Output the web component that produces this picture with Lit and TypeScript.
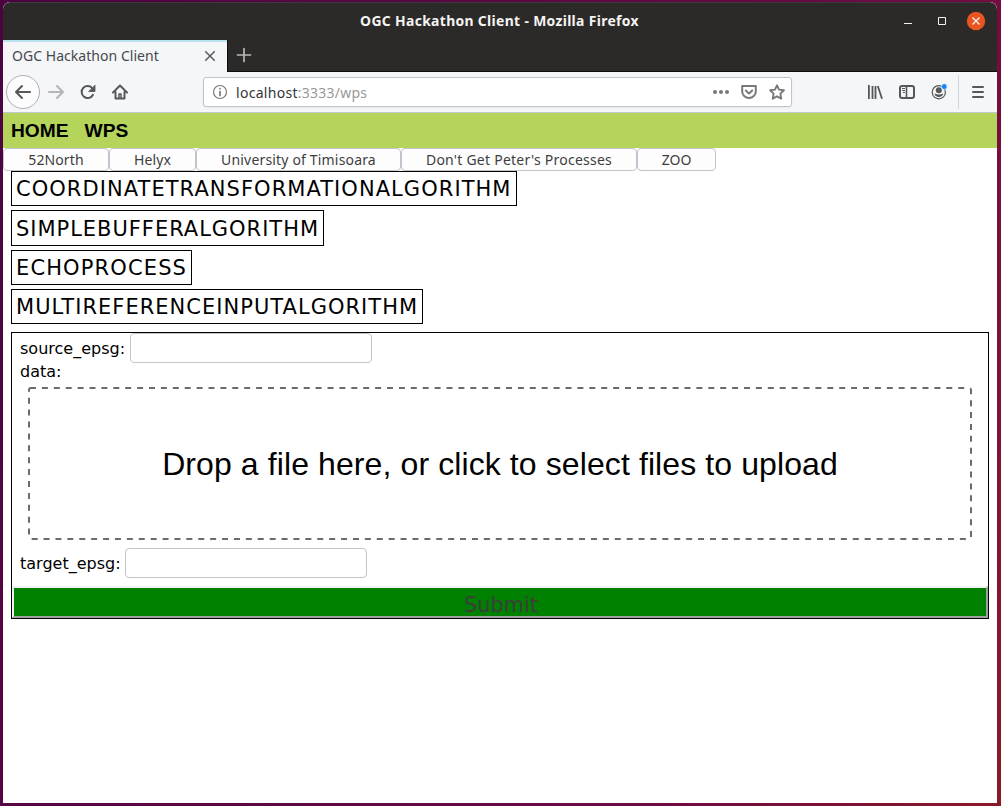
import { LitElement, html, css, svg } from "lit";
import { customElement } from "lit/decorators.js";

const servers = [
  { name: "52North", width: 106, spacing: 0.1 },
  { name: "Helyx", width: 87, spacing: 0.1 },
  { name: "University of Timisoara", width: 205, spacing: 0.17 },
  { name: "Don't Get Peter's Processes", width: 236, spacing: 0.24 },
  { name: "ZOO", width: 79, spacing: 0 },
];
const processes = [
  { name: "COORDINATETRANSFORMATIONALGORITHM", width: 506, height: 35, spacing: 1.05, line: 34 },
  { name: "SIMPLEBUFFERALGORITHM", width: 313, height: 36, spacing: 0.97, line: 36 },
  { name: "ECHOPROCESS", width: 181, height: 35, spacing: 1.13, line: 34 },
  { name: "MULTIREFERENCEINPUTALGORITHM", width: 412, height: 35, spacing: 1.02, line: 34 },
];

const icon = (size: number, body: unknown) =>
  html`<svg width=${size} height=${size} viewBox="0 0 16 16" fill="none" stroke="currentColor" stroke-width="2" stroke-linecap="round" stroke-linejoin="round">${body}</svg>`;

@customElement("browser-chrome")
class BrowserChrome extends LitElement {
  static styles = css`
    :host { display: block; font-family: "Noto Sans", sans-serif; }
    * { box-sizing: border-box; }
    svg { display: block; flex: none; overflow: visible; }
    .title { height: 38px; display: grid; grid-template-columns: 1fr auto 1fr; align-items: center; background: #2c2929; color: #f5f4f2; border-top: 1px solid #3c3a3a; border-radius: 7px 7px 0 0; padding: 0 11px 2px 0; }
    .caption { grid-column: 2; font-weight: 700; font-size: 13.9px; letter-spacing: 0.34px; white-space: nowrap; padding-left: 10px; }
    .controls { display: flex; justify-content: flex-end; align-items: center; }
    .tabs { height: 32px; display: flex; background: #2c2929; color: #b9b8b8; }
    .rest { flex: 1; border-bottom: 1px solid #0f0c0c; border-left: 1px solid #0f0c0c; padding: 7px 8px; }
    .tab { width: 224px; background: #f5f6f7; border-top: 2px solid #b9e3ef; color: #45494c; display: flex; align-items: center; justify-content: space-between; padding: 0 9px 2px; font-size: 14px; letter-spacing: 0.04px; }
    .name { padding-bottom: 2px; }
    .close { color: #5c5e60; }
    .tools { height: 41px; background: #f5f6f8; border-bottom: 1px solid #c3c6cc; display: flex; align-items: center; color: #555759; padding-left: 3px; }
    .back { width: 34px; height: 34px; border: 1px solid #aeb0b3; border-radius: 50%; background: #fcfcfd; display: grid; place-items: center; }
    .forward { color: #b4b5b8; margin-left: 8px; }
    .reload { margin-left: 16px; }
    .home { margin-left: 16px; }
    .url { width: 589px; height: 30px; margin-left: 75px; border: 1px solid #c0c4c9; border-radius: 3px; background: #fff; display: flex; align-items: center; padding: 0 6px 0 8px; color: #77797b; box-shadow: 0 1px 3px #0000000d; }
    .address { flex: 1; margin-left: 8px; font-size: 14px; letter-spacing: 0.22px; color: #999; }
    .host { color: #343638; letter-spacing: 0.3px; }
    .gap { margin-left: 12px; }
    .right { display: flex; align-items: center; gap: 16px; margin-left: 75px; }
    .menu { margin-left: 11px; height: 34px; border-left: 1px solid #d4d5d8; padding-left: 11px; display: flex; align-items: center; }
  `;
  render() {
    return html`
      <div class="title">
        <span class="caption">OGC Hackathon Client - Mozilla Firefox</span>
        <div class="controls">
          <svg width="80" height="20" viewBox="0 0 80 20" fill="none" stroke="#f4f2f0">
            <path d="M-2 12.500h8M32.500 6.500h7v7h-7z" /><circle cx="70" cy="10" r="9.2" fill="#e95420" stroke="none" />
            <path d="m66.500 6.500 7 7m0-7-7 7" stroke-width="1.400" />
          </svg>
        </div>
      </div>
      <div class="tabs">
        <div class="tab"><span class="name">OGC Hackathon Client</span><span class="close">${icon(16, svg`<path d="m3.700 3.700 8.600 8.600m0-8.600-8.600 8.600" stroke-width="1.600"/>`)}</span></div>
        <div class="rest">${icon(16, svg`<path d="M8 1.500v13M1.500 8h13" stroke-width="1.700"/>`)}</div>
      </div>
      <div class="tools">
        <div class="back">${icon(16, svg`<path d="M15 8H1.500M7 2 1 8l6 6"/>`)}</div>
        <div class="forward">${icon(16, svg`<path d="M1 8h13.500M9 2l6 6-6 6"/>`)}</div>
        <div class="reload">${icon(16, svg`<path d="M13 10.800A6 6 0 1 1 12.500 4.500"/><path d="M15 1.500v6H9z" fill="currentColor" stroke-width=".8"/>`)}</div>
        <div class="home">${icon(16, svg`<path d="M1 8.500 8 1.500l7 7M3.500 8v6.500h9V8"/><path d="M7 14v-4h2v4" stroke-width="1.500"/>`)}</div>
        <div class="url">
          ${icon(16, svg`<circle cx="8" cy="8" r="6.500" stroke-width="1.200"/><path d="M8 7.500v4M8 4.700v.1" stroke-width="1.700"/>`)}
          <span class="address"><span class="host">localhost</span>:3333/wps</span>
          ${icon(16, svg`<g fill="currentColor" stroke="none"><circle cx="2" cy="8" r="2"/><circle cx="8" cy="8" r="2"/><circle cx="14" cy="8" r="2"/></g>`)}
          <span class="gap">${icon(16, svg`<path d="M1.200 2h13.600v5.500a6.800 6.500 0 0 1-13.600 0zM4.800 6.500 8 9.600l3.200-3.100"/>`)}</span>
          <span class="gap">${icon(16, svg`<path d="m8 1.300 2.050 4.350 4.850.65-3.500 3.350.85 5L8 12.350l-4.250 2.300.85-5L1.100 6.300l4.850-.65z" stroke-width="1.900"/>`)}</span>
        </div>
        <div class="right">
          ${icon(16, svg`<path d="M1.900 1v14M5.500 2v13M8.500 2v13" stroke-width="1.800" stroke-linecap="butt"/><path d="M10.800 2 15 14.700" stroke-width="1.800" stroke-linecap="butt"/>`)}
          ${icon(16, svg`<rect x="1" y="2" width="14" height="12" rx="2"/><path d="M7.500 2v12" stroke-width="1.600"/><path d="M3 4.500h3M3 6.500h3M4 8.500h2" stroke-width="1" stroke-linecap="butt"/>`)}
          ${icon(16, svg`<circle cx="7.800" cy="8.200" r="6.600" stroke-width="1.200"/><circle cx="7.800" cy="6.200" r="3" fill="currentColor" stroke="none"/><path d="M3.500 9.500q4.300 2 8.600 0c0 4.500-8.600 4.500-8.600 0z" fill="currentColor" stroke="none"/><circle cx="13.300" cy="2.600" r="2.900" fill="#0a84ff" stroke="#f5f6f8" stroke-width=".7"/>`)}
        </div>
        <div class="menu">${icon(16, svg`<path d="M3 3h10M3 8h10M3 13h10"/>`)}</div>
      </div>`;
  }
}

@customElement("app-root")
class AppRoot extends LitElement {
  static styles = css`
    :host { display: block; width: 1001px; height: 806px; box-sizing: border-box; padding: 2px 4px 3px 3px; background: linear-gradient(110deg, #4b0441 0%, #600845 50%, #700b43 75%, #8b1928 100%); font-family: "DejaVu Sans", sans-serif; color: #000; }
    * { box-sizing: border-box; }
    .window { height: 801px; background: #fff; border-radius: 7px 7px 0 0; overflow: hidden; }
    .nav { height: 35px; background: #b4d45c; display: flex; align-items: center; gap: 16px; padding-left: 8px; font: bold 19.2px "Liberation Sans", sans-serif; }
    .servers { height: 23px; display: flex; }
    .server { height: 23px; border: 1px solid #c0c4cc; border-radius: 4px; display: grid; place-items: center; font: 14px/20px "Noto Sans", sans-serif; color: #3d3d3d; background: #fdfdfe; white-space: nowrap; }
    .processes { display: flex; flex-direction: column; gap: 4px; align-items: flex-start; padding-left: 8px; }
    .process { border: 1px solid #000; padding-left: 4px; font-size: 21px; white-space: nowrap; }
    .form { margin: 8px 8px 0; border: 1px solid #000; height: 287px; display: flex; flex-direction: column; font-size: 16px; }
    .row { display: flex; align-items: center; gap: 5px; padding-left: 8px; height: 30px; }
    .target { gap: 4px; }
    .input { width: 242px; height: 30px; border: 1px solid #c2c5c9; border-radius: 4px; background: #fff; }
    .data { padding-left: 8px; height: 24px; line-height: 17px; }
    .drop { display: block; margin: 0 16px 8px; width: 944px; height: 153px; font: 32px "Liberation Sans", sans-serif; letter-spacing: 0.1px; }
    .submit { margin-top: 8px; height: 32px; border: 2px solid; border-color: #f0f0f0 #a0a0a0 #a0a0a0 #f0f0f0; background: #008000; color: #3d3d3d; text-align: center; font-size: 20.8px; line-height: 34px; padding-left: 2px; }
  `;
  render() {
    return html`<div class="window">
      <browser-chrome></browser-chrome>
      <div class="nav"><span>HOME</span><span>WPS</span></div>
      <div class="servers">${servers.map((s) => html`<div class="server" style="width:${s.width}px;letter-spacing:${s.spacing}px">${s.name}</div>`)}</div>
      <div class="processes">${processes.map((p) => html`<div class="process" style="width:${p.width}px;height:${p.height}px;letter-spacing:${p.spacing}px;line-height:${p.line}px">${p.name}</div>`)}</div>
      <div class="form">
        <div class="row"><span>source_epsg:</span><div class="input"></div></div>
        <div class="data">data:</div>
        <svg class="drop" viewBox="0 0 944 153"><rect x="1" y="1" width="942" height="151" rx="2" fill="none" stroke="#686c70" stroke-width="2" stroke-dasharray="6 5.900" stroke-dashoffset="1" /><text x="472" y="88" text-anchor="middle">Drop a file here, or click to select files to upload</text></svg>
        <div class="row target"><span>target_epsg:</span><div class="input"></div></div>
        <div class="submit">Submit</div>
      </div>
    </div>`;
  }
}
